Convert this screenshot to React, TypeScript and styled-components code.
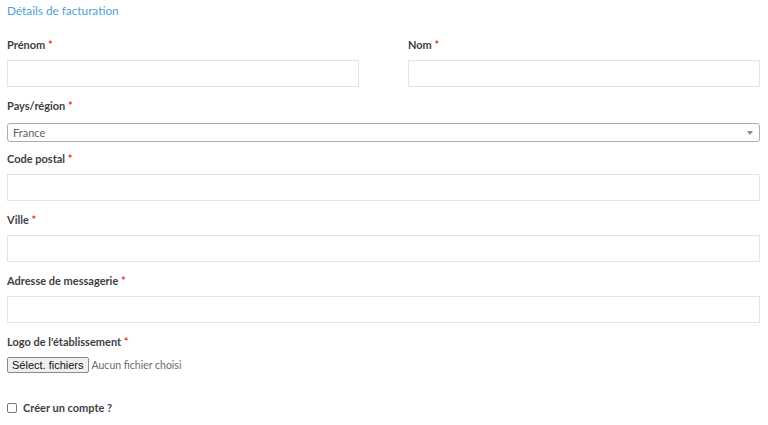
import React from 'react';
import styled, { createGlobalStyle } from 'styled-components';

const GlobalStyle = createGlobalStyle`
  body {
    margin: 0;
    background: #fff;
    font-family: Lato, "Noto Sans", sans-serif;
  }
`;

const StyledForm = styled.div`
  width: 768px;
  height: 425px;
  box-sizing: border-box;
  padding: 3px 8px 0 7px;
  overflow: hidden;
`;

const Title = styled.h3`
  margin: 0 0 18px;
  font-size: 11.8px;
  line-height: 16px;
  font-weight: 400;
  color: #4c9fd5;
`;

const Columns = styled.div`
  display: grid;
  grid-template-columns: 352px 352px;
  justify-content: space-between;
`;

const Field = styled.div<{ $gap?: number }>`
  margin-bottom: ${({ $gap }) => ($gap ?? 11)}px;
`;

const Label = styled.label<{ $tight?: boolean }>`
  display: block;
  margin-bottom: ${({ $tight }) => ($tight ? 0 : 7)}px;
  font-size: 11px;
  line-height: 16px;
  font-weight: 700;
  color: #3f3f3f;

  abbr {
    color: #e2401c;
    text-decoration: none;
  }
`;

const TextInput = styled.input`
  display: block;
  width: 100%;
  height: 27px;
  box-sizing: border-box;
  margin: 0;
  border: 1px solid #e4e4e4;
  background: #fff;
  outline: none;
`;

const SelectBox = styled.div`
  display: flex;
  align-items: center;
  justify-content: space-between;
  height: 19px;
  box-sizing: border-box;
  margin-top: 9px;
  padding: 0 6px 0 5px;
  border: 1px solid #acacac;
  border-radius: 3px;
  font-size: 11px;
  color: #5f5f5f;

  .arrow {
    width: 0;
    height: 0;
    border-left: 3px solid transparent;
    border-right: 3px solid transparent;
    border-top: 4px solid #888;
  }
`;

const FileRow = styled.div`
  display: flex;
  align-items: center;
  gap: 3px;

  .empty {
    font-size: 10.5px;
    color: #6a6a6a;
  }
`;

const FileButton = styled.button`
  height: 16px;
  padding: 0 4px;
  border: 1px solid #8a8a8a;
  border-radius: 2px;
  background: #efefef;
  font-family: "Liberation Sans", Arial, sans-serif;
  font-size: 11px;
  line-height: 14px;
  color: #111;
`;

const CheckRow = styled.label`
  display: flex;
  align-items: center;
  gap: 6px;
  margin-top: 28px;
  font-size: 11px;
  font-weight: 700;
  color: #3f3f3f;

  .box {
    width: 8px;
    height: 8px;
    border: 1px solid #777;
    border-radius: 2px;
    background: #fff;
  }
`;

function Required() {
  return <abbr title="obligatoire">*</abbr>;
}

function App() {
  return (
    <StyledForm>
      <GlobalStyle />
      <Title>Détails de facturation</Title>
      <Columns>
        <Field>
          <Label>
            Prénom <Required />
          </Label>
          <TextInput />
        </Field>
        <Field>
          <Label>
            Nom <Required />
          </Label>
          <TextInput />
        </Field>
      </Columns>
      <Field $gap={9}>
        <Label $tight>
          Pays/région <Required />
        </Label>
        <SelectBox>
          <span>France</span>
          <span className="arrow" />
        </SelectBox>
      </Field>
      {['Code postal', 'Ville', 'Adresse de messagerie'].map((label) => (
        <Field key={label}>
          <Label>
            {label} <Required />
          </Label>
          <TextInput />
        </Field>
      ))}
      <Field $gap={0}>
        <Label>
          Logo de l'établissement <Required />
        </Label>
        <FileRow>
          <FileButton>Sélect. fichiers</FileButton>
          <span className="empty">Aucun fichier choisi</span>
        </FileRow>
      </Field>
      <CheckRow>
        <span className="box" />
        Créer un compte ?
      </CheckRow>
    </StyledForm>
  );
}

export default App;
